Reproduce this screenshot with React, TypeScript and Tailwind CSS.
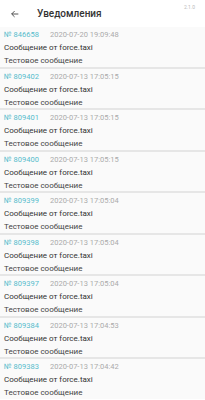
import React from "react";

const items = [
  ["846658", "2020-07-20 19:09:48"],
  ["809402", "2020-07-13 17:05:15"],
  ["809401", "2020-07-13 17:05:15"],
  ["809400", "2020-07-13 17:05:15"],
  ["809399", "2020-07-13 17:05:04"],
  ["809398", "2020-07-13 17:05:04"],
  ["809397", "2020-07-13 17:05:04"],
  ["809384", "2020-07-13 17:04:53"],
  ["809383", "2020-07-13 17:04:42"],
];

export default function App() {
  return (
    <div className="w-[205px] h-[400px] overflow-hidden bg-white" style={{ fontFamily: "Roboto, 'Noto Sans', sans-serif" }}>
      <div className="relative h-[27px] flex items-center bg-white">
        <svg width="10" height="10" viewBox="0 0 24 24" className="ml-[10px]" fill="none" stroke="#444" strokeWidth="2.2">
          <path d="M20 12H4M11 5l-7 7 7 7" />
        </svg>
        <span className="ml-[17px] text-[10px] font-medium text-[#333]">Уведомления</span>
        <span className="absolute right-[10px] top-[4px] text-[5px] text-[#bbb]">2.1.0</span>
      </div>
      <div className="flex flex-col bg-[#e6e6e6] gap-[2px]">
        {items.map(([id, date]) => (
          <div key={id} className="bg-[#fafafa] h-[39.5px] px-[4px] pt-[3px] flex flex-col">
            <div className="flex text-[7.5px] leading-[10px]">
              <span className="text-[#56bccc] w-[46px]">№ {id}</span>
              <span className="text-[#aaa]">{date}</span>
            </div>
            <div className="text-[8px] leading-[13px] text-[#333] mt-[1px]">Сообщение от force.taxi</div>
            <div className="text-[8px] leading-[13px] text-[#444]">Тестовое сообщение</div>
          </div>
        ))}
      </div>
    </div>
  );
}
